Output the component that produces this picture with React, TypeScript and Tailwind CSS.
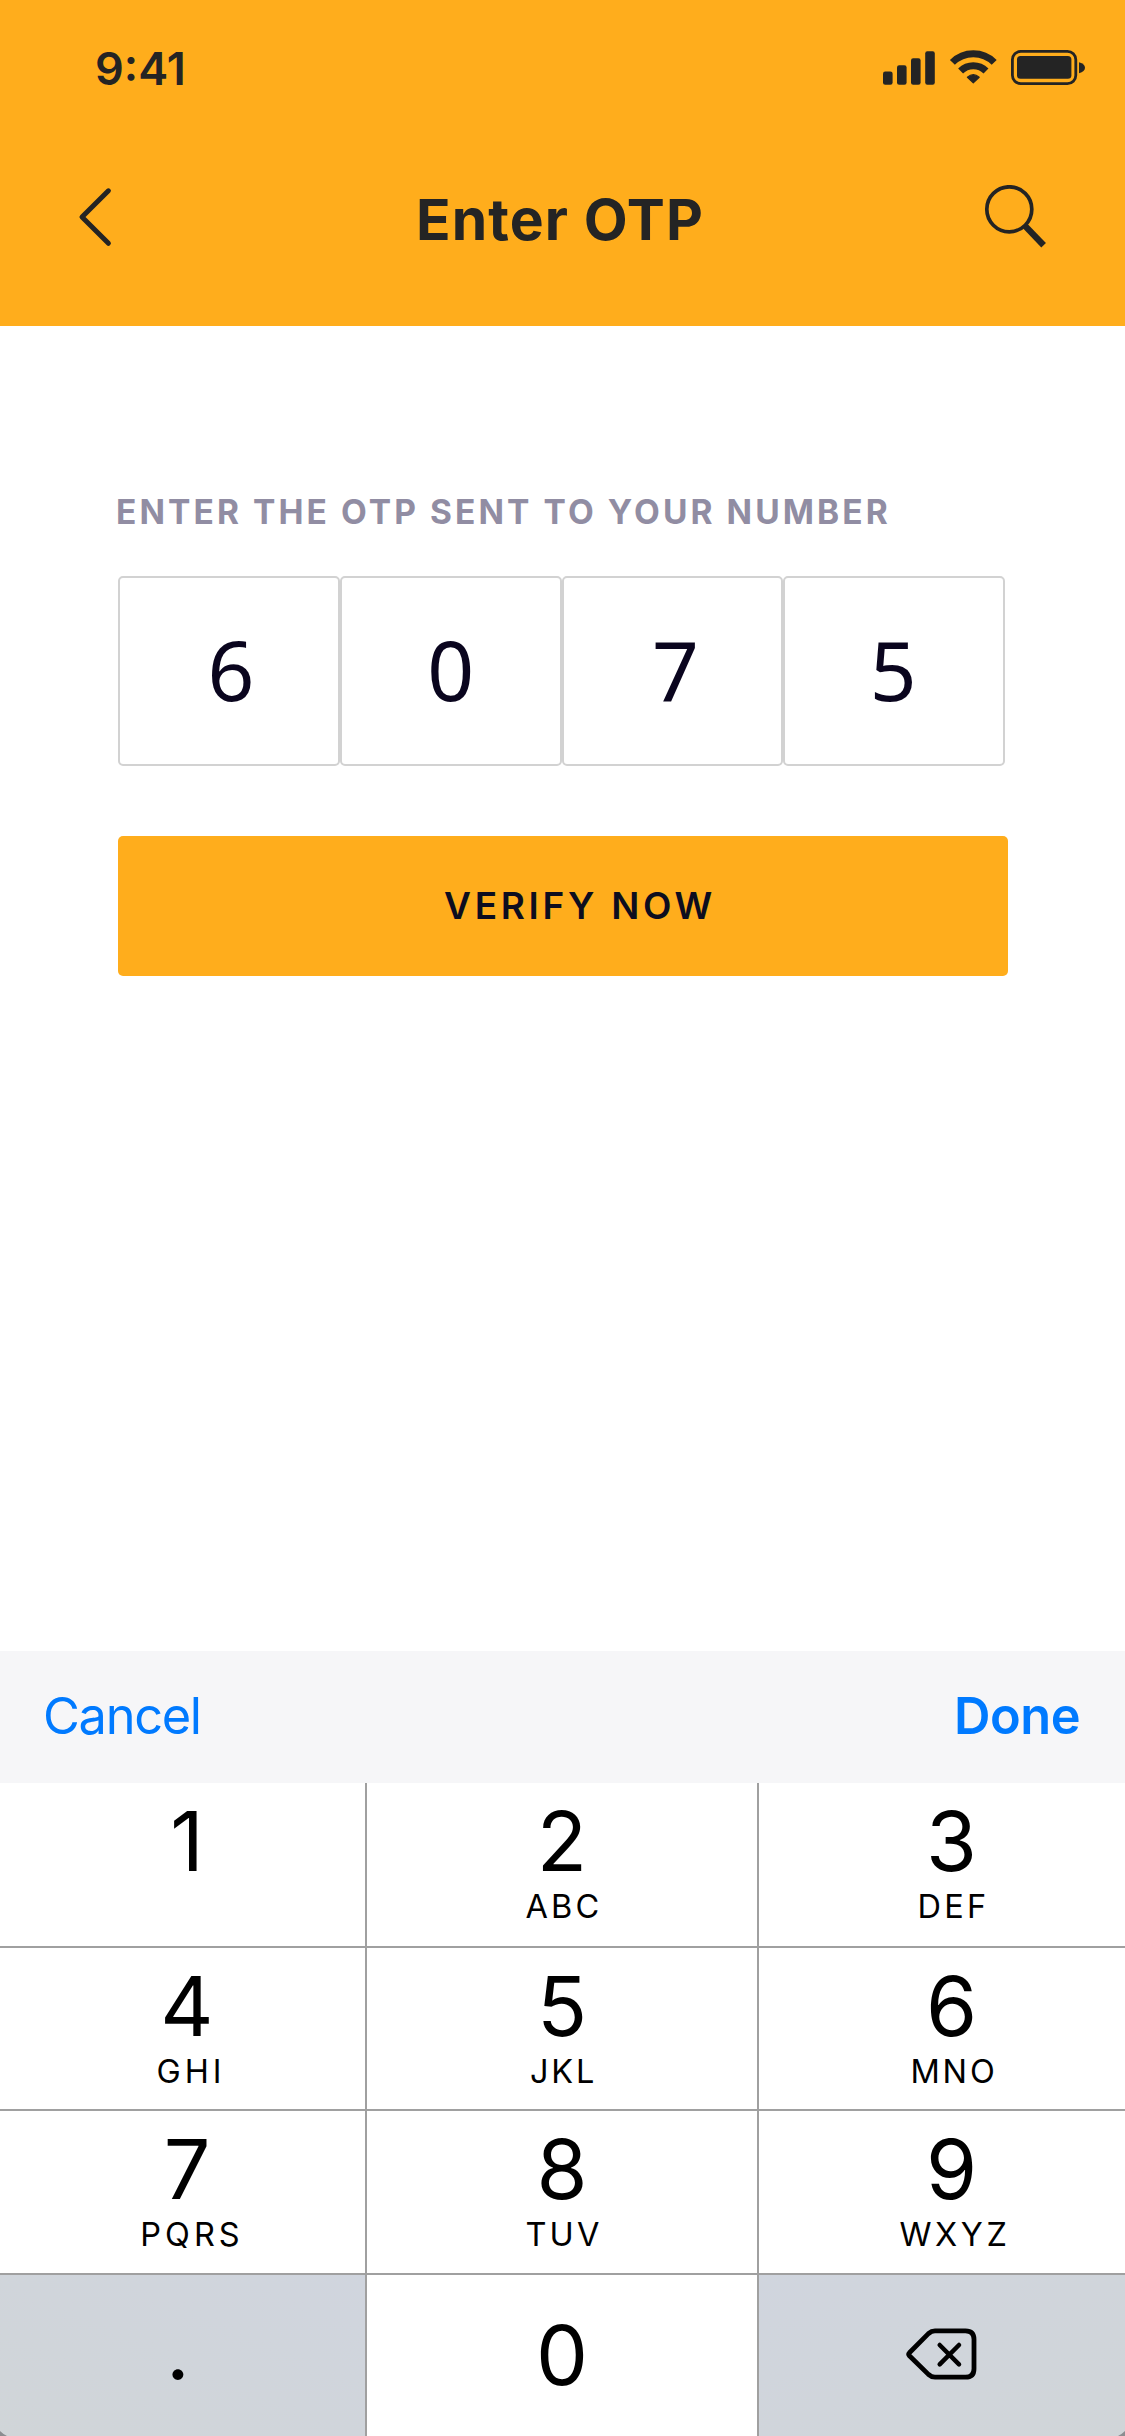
type Key = { digit: string; letters?: string; tracking?: string };

const keyRows: Key[][] = [
  [
    { digit: "1" },
    { digit: "2", letters: "ABC", tracking: "tracking-[3.2px] pl-[4px]" },
    { digit: "3", letters: "DEF", tracking: "tracking-[3.2px] pl-[4px]" },
  ],
  [
    { digit: "4", letters: "GHI", tracking: "tracking-[4px] pl-[8px]" },
    { digit: "5", letters: "JKL", tracking: "tracking-[2.8px] pl-[3px]" },
    { digit: "6", letters: "MNO", tracking: "tracking-[2.8px] pl-[5px]" },
  ],
  [
    { digit: "7", letters: "PQRS", tracking: "tracking-[4px] pl-[10px]" },
    { digit: "8", letters: "TUV", tracking: "tracking-[3.2px] pl-[4px]" },
    { digit: "9", letters: "WXYZ", tracking: "tracking-[3.600px] pl-[7px]" },
  ],
];

const columnPadding = ["pl-[9px] border-r-2", "border-r-2", "pl-[19px]"];

function SignalIcons() {
  return (
    <svg className="mt-[3px] h-[37px] w-[205px]" viewBox="881 49 205 37" fill="#242424">
      <rect x="883" y="71.5" width="9.6" height="13.2" rx="2.2" />
      <rect x="897" y="65.3" width="9.6" height="19.4" rx="2.2" />
      <rect x="911" y="58.3" width="9.6" height="26.4" rx="2.2" />
      <rect x="925.2" y="51.2" width="9.6" height="33.5" rx="2.2" />
      <g fill="none" stroke="#242424" strokeWidth="7">
        <path d="M952.4 62.4A29.5 29.5 0 0 1 994.2 62.4" />
        <path d="M960.6 70.9A18 18 0 0 1 986 70.9" />
      </g>
      <path
        d="M967.4 77.2Q973.3 72.2 979.2 77.2L973.3 82.8Z"
        stroke="#242424"
        strokeWidth="1.2"
        strokeLinejoin="round"
      />
      <rect x="1012.4" y="51.4" width="63.4" height="32.2" rx="8.4" fill="none" stroke="#242424" strokeWidth="2.8" />
      <rect x="1017" y="56" width="54.4" height="22.8" rx="3.6" />
      <path d="M1079 62.2C1087 64 1087 71.4 1079 73.2Z" />
    </svg>
  );
}

function Header() {
  return (
    <header className="h-[326px] bg-[#ffad1c] text-[#242424]">
      <div className="flex h-[93px] items-start justify-between pt-[46px] pr-[39px] pl-[95px]">
        <span className="text-[45px] leading-none font-semibold">9:41</span>
        <SignalIcons />
      </div>
      <div className="mt-[92px] flex items-start justify-between pr-[79px] pl-[76px]">
        <svg className="h-[64px] w-[40px]" viewBox="76 185 40 64" fill="none">
          <path
            d="M108.4 190.8L82 217L108.4 243.3"
            stroke="#242424"
            strokeWidth="5"
            strokeLinecap="round"
            strokeLinejoin="round"
          />
        </svg>
        <h1 className="mt-[6px] ml-[20px] text-[57px] leading-none font-bold tracking-[1.1px] whitespace-nowrap">
          Enter OTP
        </h1>
        <svg className="h-[64px] w-[62px]" viewBox="984 185 62 64" fill="none" stroke="#242424">
          <circle cx="1009.3" cy="209.3" r="22.5" strokeWidth="3.7" />
          <path d="M1024.8 225.6L1043.6 245.3" strokeWidth="6.4" />
        </svg>
      </div>
    </header>
  );
}

function OtpForm() {
  const cells = [
    { value: "6", pad: "pl-[4px]" },
    { value: "0", pad: "" },
    { value: "7", pad: "pl-[6px]" },
    { value: "5", pad: "pr-[2px]" },
  ];
  return (
    <main className="h-[1325px] pt-[170px]">
      <p className="ml-[116px] text-[33.5px] leading-[33px] font-bold tracking-[3.08px] whitespace-nowrap text-[#918da3]">
        ENTER THE OTP SENT TO YOUR NUMBER
      </p>
      <div className="mt-[47px] ml-[118px] grid h-[190px] w-[887px] grid-cols-4 font-['Noto_Sans',sans-serif]">
        {cells.map((c) => (
          <div
            key={c.value}
            className={`flex items-center justify-center rounded-[5px] border-2 border-[#d2d2d2] pb-[5px] text-[82px] leading-none font-normal text-[#0a051e] ${c.pad}`}
          >
            {c.value}
          </div>
        ))}
      </div>
      <button className="mt-[70px] ml-[118px] flex h-[140px] w-[890px] items-center justify-center rounded-[5px] bg-[#ffad1c] pb-[2px] pl-[34px] text-[37px] leading-none font-semibold tracking-[3.7px] text-[#0d0d1f]">
        VERIFY NOW
      </button>
    </main>
  );
}

function DeleteIcon() {
  return (
    <svg
      className="h-[54px] w-[72px]"
      viewBox="906 2328 72 54"
      fill="none"
      stroke="#000"
      strokeLinecap="round"
      strokeLinejoin="round"
    >
      <path
        d="M909.4 2352.8L928.4 2333.6Q931.5 2330.8 935 2330.8H965.5Q974 2330.8 974 2339.3V2368.7Q974 2377.2 965.5 2377.2H935Q931.5 2377.2 928.4 2374.4L909.4 2355.8Q908 2354.3 909.4 2352.8Z"
        strokeWidth="4.8"
      />
      <path d="M939.7 2345L959 2364.4M959 2345L939.7 2364.4" strokeWidth="4.5" />
    </svg>
  );
}

function Keypad() {
  return (
    <section className="bg-white text-black">
      <div className="flex h-[132px] items-center justify-between bg-[#f6f6f8] pr-[45px] pb-[2px] pl-[43px] text-[50.5px] leading-none text-[#007aff]">
        <span className="tracking-[-1.3px]">Cancel</span>
        <span className="font-semibold tracking-[-0.5px]">Done</span>
      </div>
      <div className="grid grid-cols-[367px_392px_366px] grid-rows-[165px_163px_164px_161px]">
        {keyRows.flatMap((row) =>
          row.map((key, col) => (
            <div
              key={key.digit}
              className={`flex flex-col items-center border-b-2 border-[#a0a0a0] pt-[17px] leading-none ${columnPadding[col]}`}
            >
              <span className="text-[82.5px] leading-none">{key.digit}</span>
              {key.letters && (
                <span className={`mt-[8px] text-[32.5px] leading-none ${key.tracking}`}>{key.letters}</span>
              )}
            </div>
          )),
        )}
        <div className="flex justify-center overflow-hidden border-r-2 border-[#a0a0a0] bg-linear-to-tr from-[#d0d5d8] to-[#d0d5de] pt-[33px] pr-[9px] text-[82.5px] leading-none">
          .
        </div>
        <div className="flex justify-center border-r-2 border-[#a0a0a0] pt-[39px] text-[82.5px] leading-none">0</div>
        <div className="bg-linear-to-br from-[#d0d5de] to-[#d0d5d8] pt-[53px] pl-[147px]">
          <DeleteIcon />
        </div>
      </div>
    </section>
  );
}

export default function App() {
  return (
    <div className="relative h-[2436px] w-[1125px] overflow-hidden bg-white font-['Inter',sans-serif]">
      <Header />
      <OtpForm />
      <Keypad />
      <svg className="absolute bottom-0 left-0 h-[6px] w-[8px]" viewBox="0 0 8 6">
        <path d="M0 1Q3 4 7 6H0Z" fill="#8b8d90" />
      </svg>
      <svg className="absolute right-0 bottom-0 h-[6px] w-[8px]" viewBox="0 0 8 6">
        <path d="M8 1Q5 4 1 6H8Z" fill="#8b8d90" />
      </svg>
    </div>
  );
}
